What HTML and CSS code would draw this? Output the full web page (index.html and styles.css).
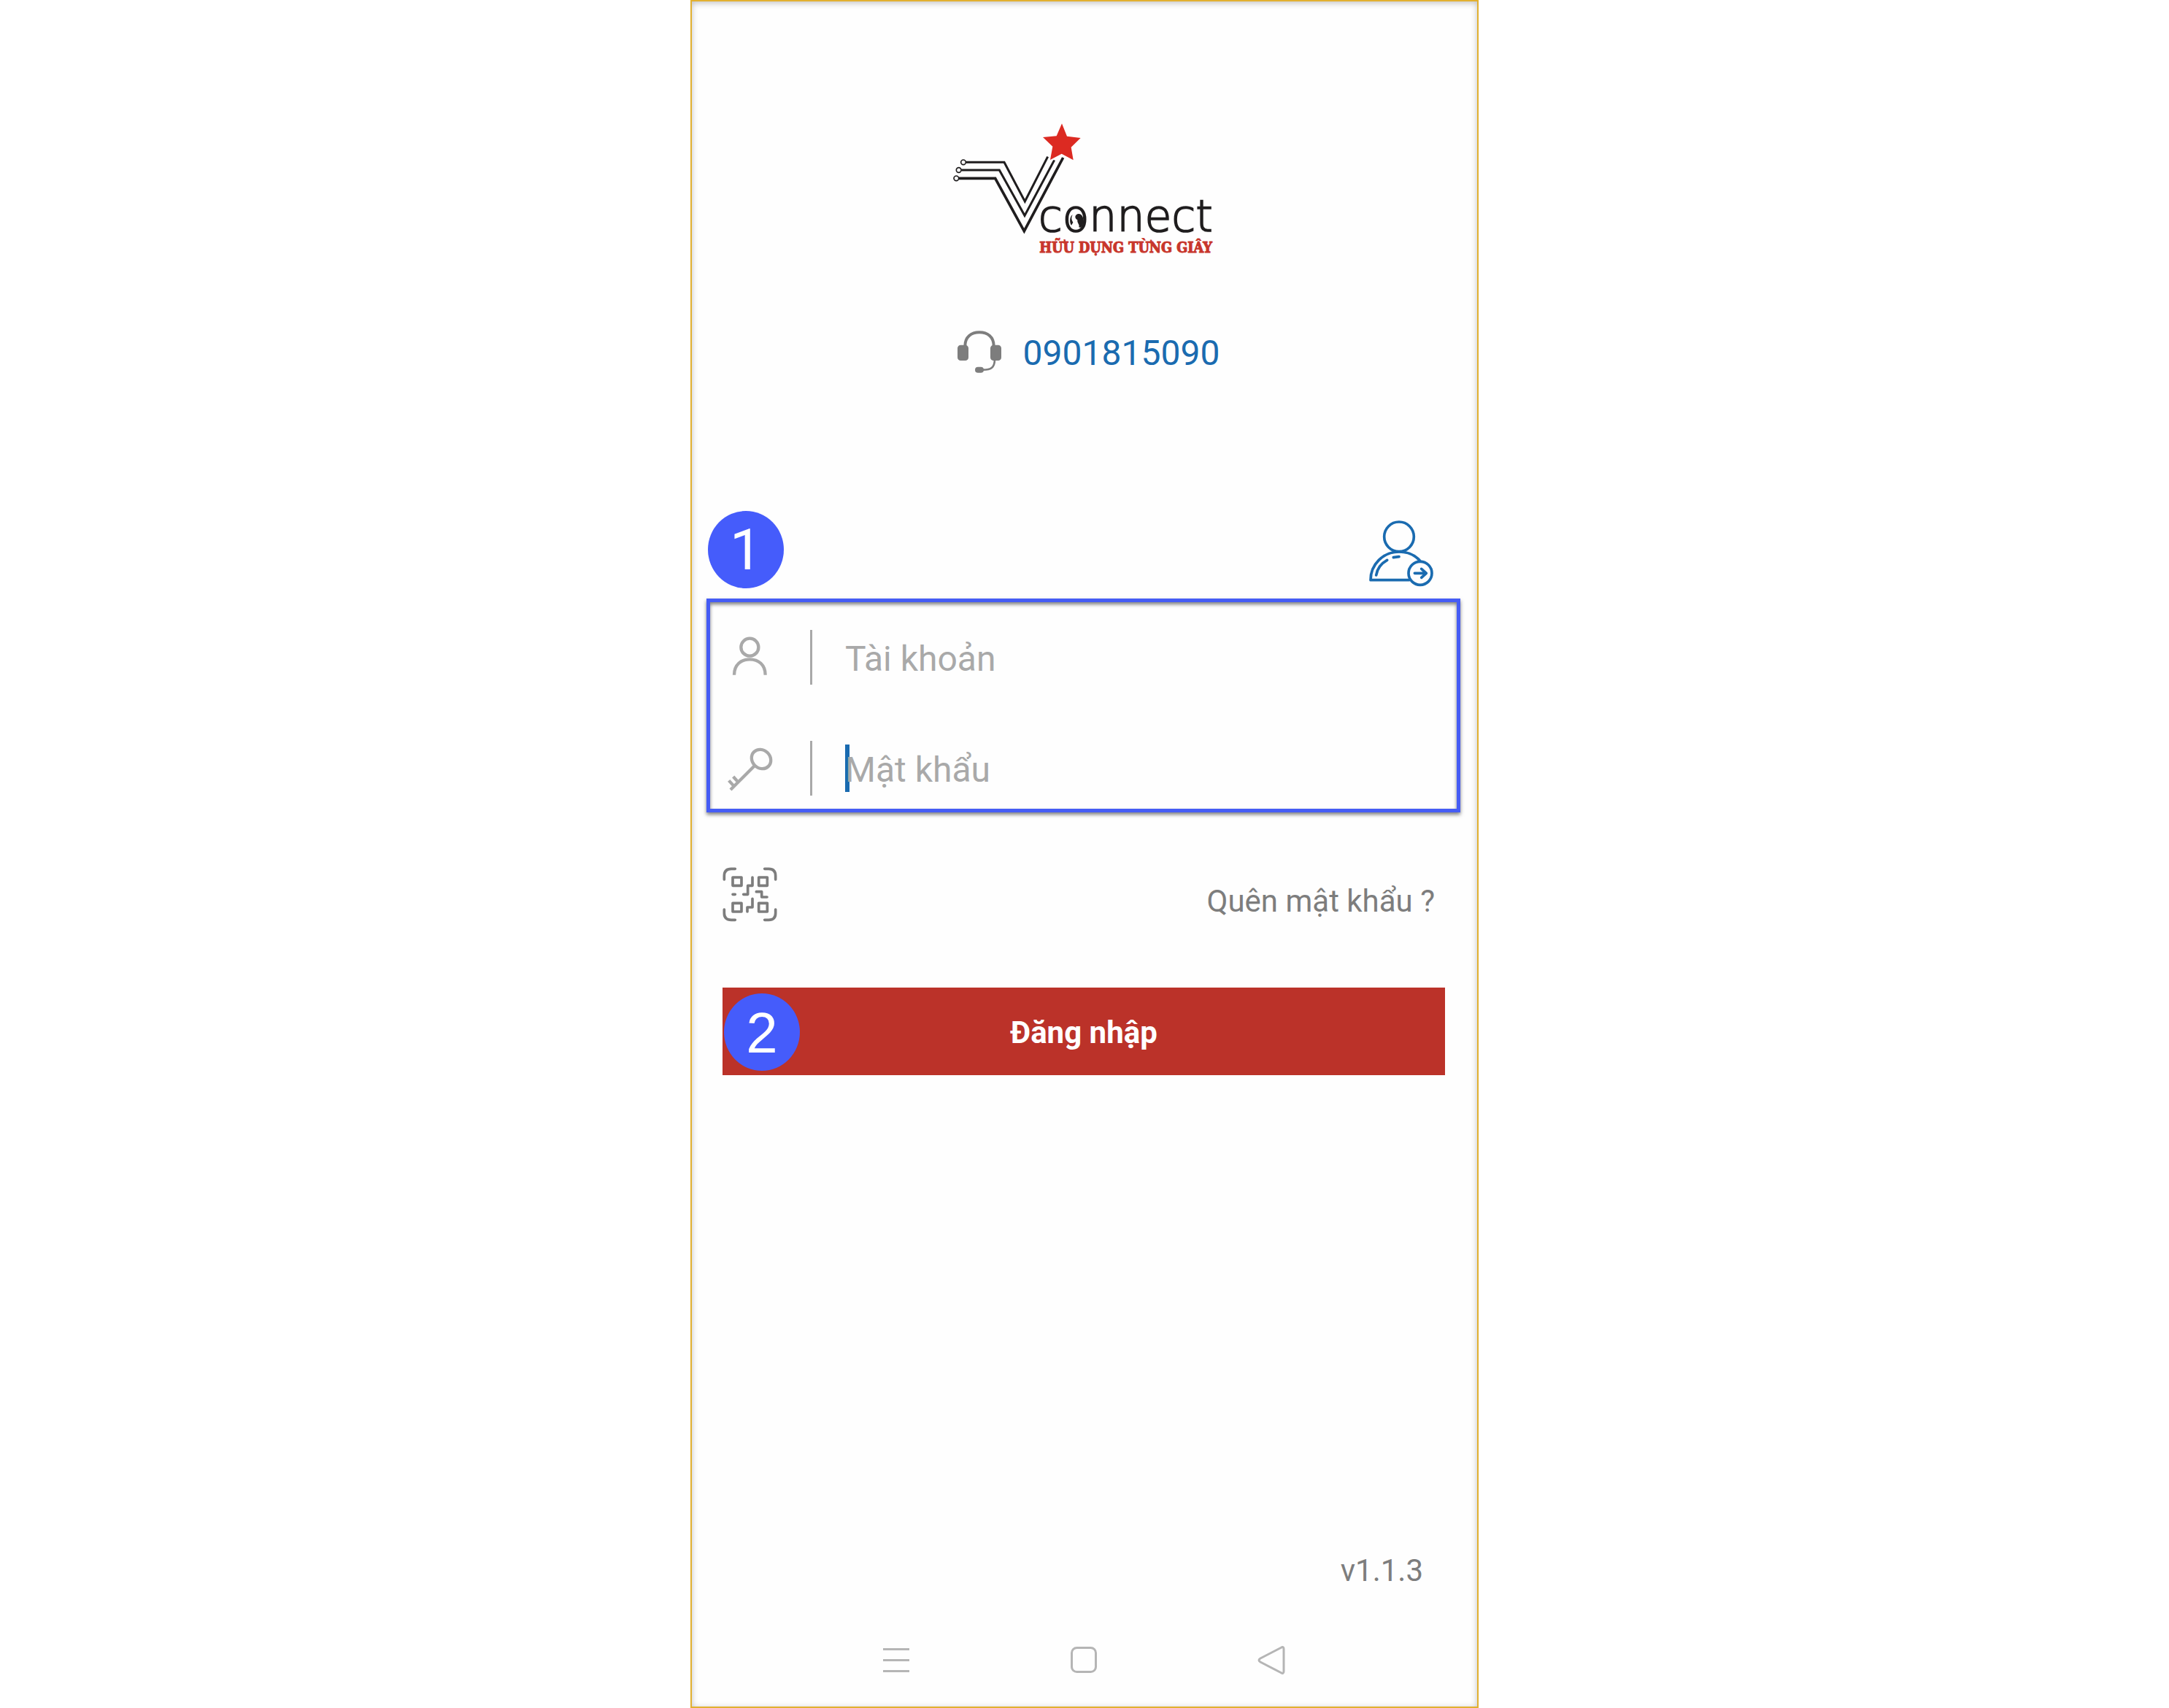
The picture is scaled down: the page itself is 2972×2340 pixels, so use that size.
FILE: index.html
```html
<!DOCTYPE html>
<html lang="vi">
<head>
<meta charset="utf-8">
<meta name="viewport" content="width=device-width, initial-scale=1">
<title>Vconnect</title>
<link rel="stylesheet" href="styles.css">
</head>
<body>
<main class="phone">
  <header class="brand">
    <svg class="logo" viewBox="30 30 1110 600" role="img" aria-label="Vconnect">
      <g class="logo-lines">
        <path stroke-width="9" d="M101 217H258L343 378L437 194"/>
        <path stroke-width="9" d="M82 249H238L342 436L464 208"/>
        <path stroke-width="11" d="M72 283H221L340 500L500 198"/>
        <circle stroke-width="5" cx="90" cy="217" r="10"/>
        <circle stroke-width="5" cx="71" cy="249" r="10"/>
        <circle stroke-width="5" cx="61" cy="283" r="10"/>
      </g>
      <path class="logo-star" d="M495 58L516 110L572 117L533 155L542 208L494 182L447 207L457 152L417 114L473 109Z"/>
      <text class="logo-word" x="398" y="502">connect</text>
      <path class="logo-globe" d="M559 430C577 425 586 445 583 465C580 483 572 488 565 484C569 471 557 468 559 454C547 448 547 435 559 430ZM539 432C527 440 525 464 534 476L541 464C534 453 533 445 539 432Z"/>
      <text class="logo-tag" x="403" y="588">HỮU DỤNG TỪNG GIÂY</text>
    </svg>
    <a class="hotline" href="tel:0901815090">
      <svg class="hotline-icon" viewBox="66 66 180 192" aria-hidden="true">
        <path fill="none" stroke="currentColor" stroke-width="12" d="M97 132C97 95 122 76 156 76S215 95 215 132"/>
        <rect fill="currentColor" x="66" y="128" width="45" height="64" rx="13"/>
        <rect fill="currentColor" x="201" y="128" width="45" height="64" rx="13"/>
        <path fill="none" stroke="currentColor" stroke-width="8" d="M219 188C218 220 205 230 170 230"/>
        <rect fill="currentColor" x="138" y="218" width="36" height="24" rx="12"/>
      </svg>
      <span>0901815090</span>
    </a>
  </header>

  <form class="login">
    <div class="login-top">
      <span class="badge">1</span>
      <button class="icon-button register" type="button" aria-label="Đăng ký">
        <svg class="register-icon" viewBox="102 30 276 318" aria-hidden="true">
          <circle cx="231" cy="136" r="61"/>
          <path d="M272 314H114C114 250 165 198 231 198C270 198 298 212 318 236"/>
          <path d="M137 294C141 268 157 246 182 232M208 221L231 218"/>
          <circle cx="318" cy="286" r="48"/>
          <path d="M295 286H342M323 268L343 286L323 304"/>
        </svg>
      </button>
    </div>

    <div class="fields">
      <label class="field">
        <svg class="field-icon" viewBox="165 519 198 225" aria-hidden="true">
          <circle cx="262" cy="590" r="36"/>
          <path d="M198 704C198 662 226 640 262 640S326 662 326 704"/>
        </svg>
        <span class="field-box">
          <input class="field-input" type="text" placeholder="Tài khoản" aria-label="Tài khoản">
        </span>
      </label>
      <label class="field">
        <svg class="field-icon" viewBox="165 975 198 225" aria-hidden="true">
          <ellipse cx="309" cy="1050" rx="42" ry="37" transform="rotate(45 309 1050)"/>
          <path d="M282 1077L183 1176M176 1138L196 1160M194 1122L214 1144"/>
        </svg>
        <span class="field-box">
          <span class="caret"></span>
          <input class="field-input" type="password" placeholder="Mật khẩu" aria-label="Mật khẩu">
        </span>
      </label>
    </div>

    <div class="login-tools">
      <button class="icon-button" type="button" aria-label="Quét mã QR">
        <svg class="qr-icon" viewBox="150 84 225 225" aria-hidden="true">
          <path d="M157 135V120Q157 91 186 91H202M323 91H340Q368 91 368 120V135M368 258V273Q368 301 340 301H323M202 301H186Q157 301 157 273V258"/>
          <path d="M192 126H228V160H192ZM299 126H334V160H299ZM192 232H228V267H192ZM299 232H334V267H299Z"/>
          <path d="M273 126V160H254V196H236M192 196H202M289 185H311V207H333M273 214V249H252V267"/>
        </svg>
      </button>
      <a class="forgot" href="#">Quên mật khẩu ?</a>
    </div>

    <div class="submit-wrap">
      <button class="submit" type="submit">Đăng nhập</button>
      <span class="badge badge-over">2</span>
    </div>
  </form>

  <p class="version">v1.1.3</p>

  <nav class="system-nav">
    <button class="icon-button" type="button" aria-label="Menu">
      <svg class="nav-icon" viewBox="0 0 40 40" aria-hidden="true"><path d="M2 5.500H38M2 20.500H38M2 35.500H38"/></svg>
    </button>
    <button class="icon-button" type="button" aria-label="Home">
      <svg class="nav-icon" viewBox="0 0 40 40" aria-hidden="true"><rect x="3.500" y="3.500" width="33" height="33" rx="7"/></svg>
    </button>
    <button class="icon-button" type="button" aria-label="Back">
      <svg class="nav-icon" viewBox="0 0 40 40" aria-hidden="true"><path d="M33 3.500Q37 1 37 5V36Q37 40 33 37.500L5 23Q1 20.500 5 18Z"/></svg>
    </button>
  </nav>
</main>
</body>
</html>
```
FILE: styles.css
```css
* {
  box-sizing: border-box;
}

body {
  margin: 0;
  background: #fff;
  font-family: Roboto, "Liberation Sans", sans-serif;
  color: #7d7d7d;
}

.phone {
  display: flex;
  flex-direction: column;
  max-width: 1080px;
  min-height: 100vh;
  margin: 0 auto;
  padding: 158px 23px 44px 20px;
  border: 2px solid #e2b030;
  background: #fefefe;
  box-shadow: inset 0 2px 8px rgba(0, 0, 0, 0.25);
}

.brand {
  display: flex;
  flex-direction: column;
  align-items: center;
  gap: 92px;
}

.logo {
  display: block;
  width: 370px;
  height: 200px;
}

.logo-lines {
  fill: none;
  stroke: #1f1d1e;
}

.logo-star {
  fill: #dc2a22;
  stroke: #fefefe;
  stroke-width: 14px;
  paint-order: stroke;
}

.logo-word {
  fill: #1f1d1e;
  stroke: #1f1d1e;
  stroke-width: 5px;
  font: 200 180px "DejaVu Sans Light", "DejaVu Sans", sans-serif;
}

.logo-globe {
  fill: #1f1d1e;
}

.logo-tag {
  fill: #c8362c;
  stroke: #c8362c;
  stroke-width: 3px;
  font: bold 59px "DejaVu Serif Condensed", "DejaVu Serif", serif;
}

.hotline {
  display: flex;
  gap: 30px;
  padding-left: 14px;
  color: #1a6bb0;
  font-size: 48px;
  line-height: 64px;
  text-decoration: none;
}

.hotline-icon {
  width: 60px;
  height: 64px;
  color: #7d7d7d;
}

.icon-button {
  display: block;
  padding: 0;
  border: 0;
  background: none;
}

.icon-button svg {
  display: block;
  fill: none;
  stroke-linecap: round;
  stroke-linejoin: round;
}

.login {
  margin-top: 184px;
}

.login-top {
  display: flex;
  justify-content: space-between;
  padding: 0 35px 0 2px;
}

.badge {
  width: 104px;
  height: 106px;
  border-radius: 50%;
  background: #455cfb;
  color: #fff;
  font: 78px/108px Roboto, sans-serif;
  text-align: center;
}

.register-icon {
  width: 92px;
  height: 106px;
  stroke: #1a6bb0;
  stroke-width: 11px;
}

.fields {
  display: flex;
  flex-direction: column;
  gap: 77px;
  margin-top: 14px;
  padding: 38px 22px 18px;
  border: 5px solid #455cf5;
  box-shadow: 0 3px 5px rgba(0, 0, 0, 0.5), inset 0 3px 5px rgba(0, 0, 0, 0.5);
}

.field {
  display: flex;
  gap: 49px;
}

.field-icon {
  width: 66px;
  height: 75px;
  fill: none;
  stroke: #a9a9a9;
  stroke-width: 13px;
}

.field-box {
  position: relative;
  display: flex;
  flex: 1;
  height: 75px;
  padding-left: 45px;
  border-left: 3px solid #a9a9a9;
}

.field-input {
  position: relative;
  width: 100%;
  padding: 4px 0 0;
  border: 0;
  outline: 0;
  background: transparent;
  color: #555;
  font: 48px Roboto, sans-serif;
}

.field-input::placeholder {
  color: #a9a9a9;
  opacity: 1;
}

.caret {
  position: absolute;
  top: 5px;
  left: 45px;
  width: 6px;
  height: 65px;
  background: #1a6bb0;
}

.login-tools {
  display: flex;
  align-items: flex-end;
  justify-content: space-between;
  margin-top: 75px;
  padding: 0 35px 0 22px;
}

.qr-icon {
  width: 75px;
  height: 75px;
  stroke: #7d7d7d;
  stroke-width: 11px;
}

.forgot {
  color: #7d7d7d;
  font-size: 42px;
  line-height: 56px;
  text-decoration: none;
}

.submit-wrap {
  position: relative;
  margin: 90px 21px 0 22px;
}

.submit {
  display: block;
  width: 100%;
  height: 120px;
  padding: 2px 0 0;
  border: 0;
  background: #bb3229;
  color: #fff;
  font: bold 42px Roboto, sans-serif;
}

.badge-over {
  position: absolute;
  top: 8px;
  left: 2px;
  font-family: "Liberation Sans", Arial, sans-serif;
}

.version {
  margin: auto 51px 0 0;
  font-size: 42px;
  line-height: 56px;
  text-align: right;
}

.system-nav {
  display: flex;
  justify-content: center;
  gap: 217px;
  margin-top: 74px;
}

.nav-icon {
  width: 40px;
  height: 40px;
  stroke: #b5b5b5;
  stroke-width: 3px;
}

.nav-icon path {
  stroke-linecap: butt;
}
```
